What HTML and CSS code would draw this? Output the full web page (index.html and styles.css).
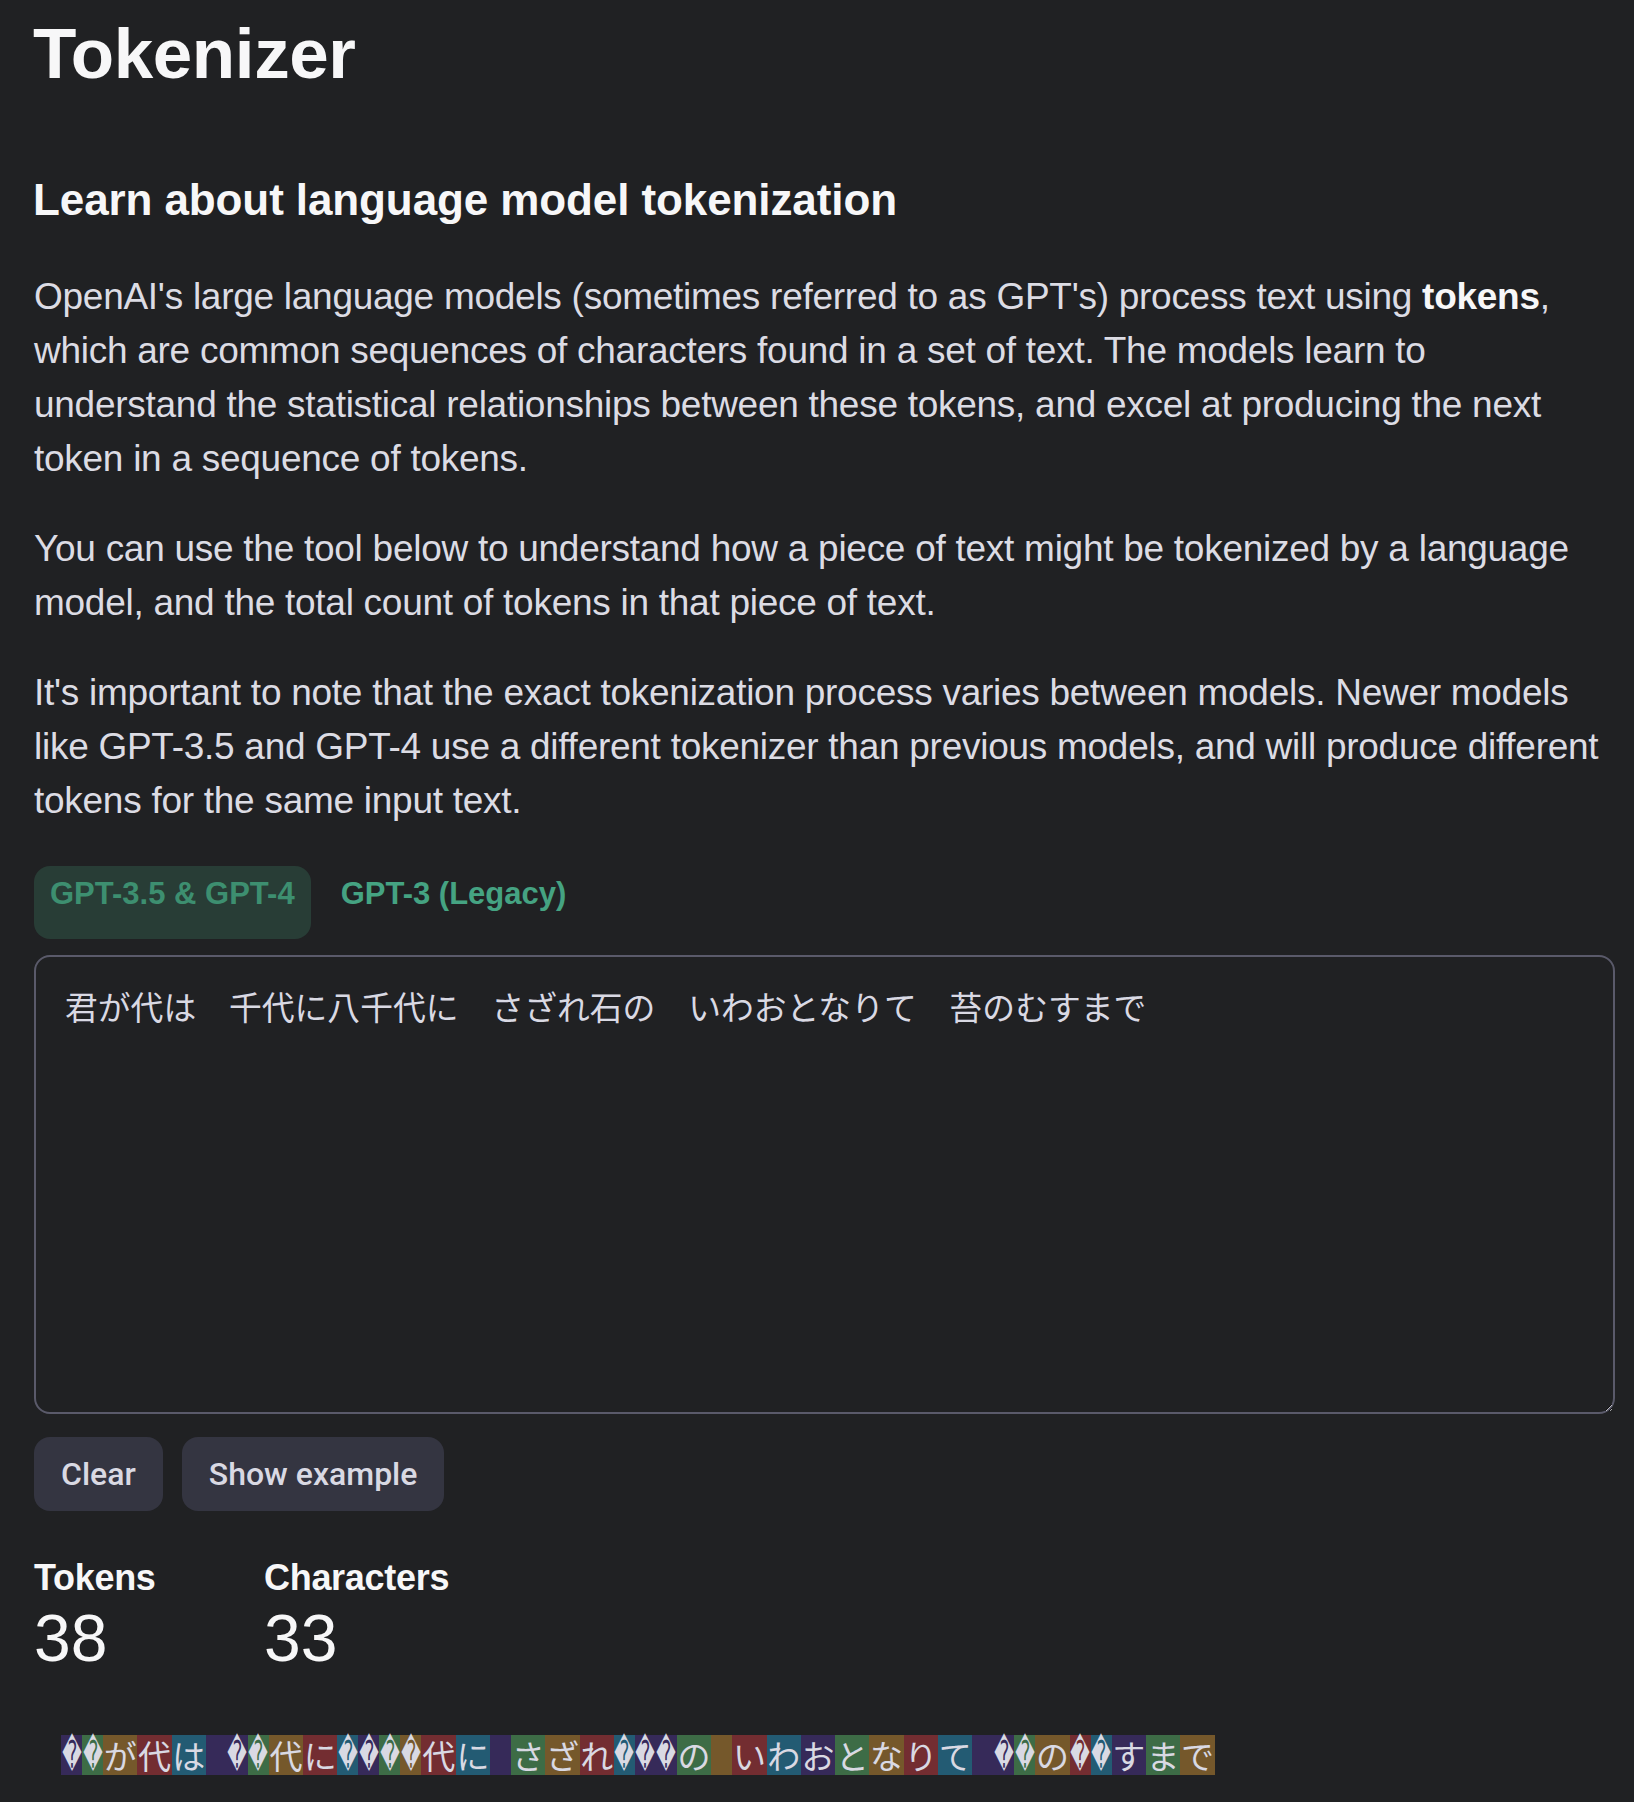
FILE: index.html
```html
<!DOCTYPE html>
<html lang="en">
<head>
<meta charset="utf-8">
<title>Tokenizer</title>
<link rel="stylesheet" href="styles.css">
</head>
<body>
<main class="page">
  <h1 class="title">Tokenizer</h1>
  <h2 class="subtitle">Learn about language model tokenization</h2>
  <p class="para">OpenAI's large language models (sometimes referred to as GPT's) process text using <strong>tokens</strong>, which are common sequences of characters found in a set of text. The models learn to understand the statistical relationships between these tokens, and excel at producing the next token in a sequence of tokens.</p>
  <p class="para">You can use the tool below to understand how a piece of text might be tokenized by a language model, and the total count of tokens in that piece of text.</p>
  <p class="para">It's important to note that the exact tokenization process varies between models. Newer models like GPT-3.5 and GPT-4 use a different tokenizer than previous models, and will produce different tokens for the same input text.</p>

  <div class="tabs">
    <button class="tab active">GPT-3.5 &amp; GPT-4</button>
    <button class="tab">GPT-3 (Legacy)</button>
  </div>

  <textarea class="input">君が代は　千代に八千代に　さざれ石の　いわおとなりて　苔のむすまで</textarea>

  <div class="actions">
    <button class="btn">Clear</button>
    <button class="btn">Show example</button>
  </div>

  <div class="stats">
    <div class="stat stat-tokens">
      <div class="stat-label">Tokens</div>
      <div class="stat-value">38</div>
    </div>
    <div class="stat">
      <div class="stat-label">Characters</div>
      <div class="stat-value">33</div>
    </div>
  </div>

  <div class="tokens"><span class="t r1 p"><i>�</i></span><span class="t r1 g"><i>�</i></span><span class="t c y">が</span><span class="t c r">代</span><span class="t c b">は</span><span class="t r2 p"><i>�</i></span><span class="t r1 g"><i>�</i></span><span class="t c y">代</span><span class="t c r">に</span><span class="t r1 b"><i>�</i></span><span class="t r1 p"><i>�</i></span><span class="t r1 g"><i>�</i></span><span class="t r1 y"><i>�</i></span><span class="t c r">代</span><span class="t c b">に</span><span class="t s p"></span><span class="t c g">さ</span><span class="t c y">ざ</span><span class="t c r">れ</span><span class="t r1 b"><i>�</i></span><span class="t r2 p"><i>�</i><i>�</i></span><span class="t c g">の</span><span class="t s y"></span><span class="t c r">い</span><span class="t c b">わ</span><span class="t c p">お</span><span class="t c g">と</span><span class="t c y">な</span><span class="t c r">り</span><span class="t c b">て</span><span class="t r2 p"><i>�</i></span><span class="t r1 g"><i>�</i></span><span class="t c y">の</span><span class="t r1 r"><i>�</i></span><span class="t r1 b"><i>�</i></span><span class="t c p">す</span><span class="t c g">ま</span><span class="t c y">で</span></div>
</main>
</body>
</html>
```

FILE: styles.css
```css
html, body {
  margin: 0;
  padding: 0;
  background: #202123;
}

body {
  font-family: "Liberation Sans", Arial, sans-serif;
  color: #dcdce4;
}

.page {
  width: 1581px;
  margin-left: 34px;
  padding-top: 1px;
}

.title {
  margin: 10px 0 0 -1px;
  font-size: 71px;
  line-height: 86px;
  font-weight: 700;
  color: #f7f7f8;
  letter-spacing: -0.4px;
}

.subtitle {
  margin: 75px 0 0 -1px;
  font-size: 44px;
  line-height: 56px;
  font-weight: 700;
  color: #f7f7f8;
  letter-spacing: -0.1px;
}

.para {
  margin: 42px 0 0 0;
  font-size: 37px;
  line-height: 54px;
  letter-spacing: -0.27px;
}

.para + .para {
  margin-top: 36px;
}

.para strong {
  color: #f7f7f8;
  font-weight: 700;
}

.tabs {
  display: flex;
  gap: 14px;
  margin-top: 38px;
}

.tab {
  display: flex;
  align-items: flex-start;
  height: 73px;
  padding: 10px 16px 0;
  border: 0;
  border-radius: 16px;
  background: transparent;
  font-family: "Liberation Sans", Arial, sans-serif;
  font-size: 31px;
  font-weight: 700;
  line-height: 36px;
  letter-spacing: 0;
  color: #45a382;
}

.tab.active {
  background: #283d36;
  color: #3d8f70;
}

.input {
  display: block;
  box-sizing: border-box;
  width: 1581px;
  height: 459px;
  margin-top: 16px;
  padding: 25px 29px;
  background: #202123;
  border: 2px solid #5a5a6a;
  border-radius: 16px;
  color: #d9d9e3;
  font-family: "Noto Sans CJK JP", sans-serif;
  font-size: 32.8px;
  line-height: 48px;
  resize: vertical;
  outline: none;
}

.actions {
  display: flex;
  gap: 19px;
  margin-top: 23px;
}

.btn {
  height: 74px;
  padding: 0 27px;
  border: 0;
  border-radius: 16px;
  background: #343541;
  color: #d9d9e3;
  font-family: Roboto, "Liberation Sans", sans-serif;
  font-size: 32px;
  font-weight: 500;
}

.stats {
  display: flex;
  margin-top: 44px;
}

.stat-tokens {
  width: 230px;
}

.stat-label {
  font-size: 36px;
  line-height: 46px;
  font-weight: 700;
  color: #f7f7f8;
  letter-spacing: -0.3px;
}

.stat-value {
  font-size: 66px;
  line-height: 74px;
  font-weight: 400;
  color: #f7f7f8;
}

.tokens {
  display: flex;
  margin: 60px 0 40px 27px;
  font-family: "Noto Sans CJK JP", sans-serif;
  font-size: 33px;
  color: #d9d9e3;
}

.t {
  display: block;
  height: 40px;
  line-height: 40px;
  text-align: center;
  white-space: nowrap;
}

.t i {
  display: inline-block;
  width: 42px;
  margin: 0 -10.5px;
  text-align: center;
  font-style: normal;
  font-family: "DejaVu Sans", sans-serif;
  font-size: 38px;
  line-height: 40px;
  transform: scaleX(0.5);
  vertical-align: top;
}

.c { width: 34.3px; }
.r1 { width: 21px; }
.r2 { width: 42px; text-align: right; }
.s { width: 21px; }

.p { background: rgba(107, 64, 216, 0.3); }
.g { background: rgba(104, 222, 122, 0.4); }
.y { background: rgba(244, 172, 54, 0.4); }
.r { background: rgba(239, 65, 70, 0.4); }
.b { background: rgba(39, 181, 234, 0.4); }
```
